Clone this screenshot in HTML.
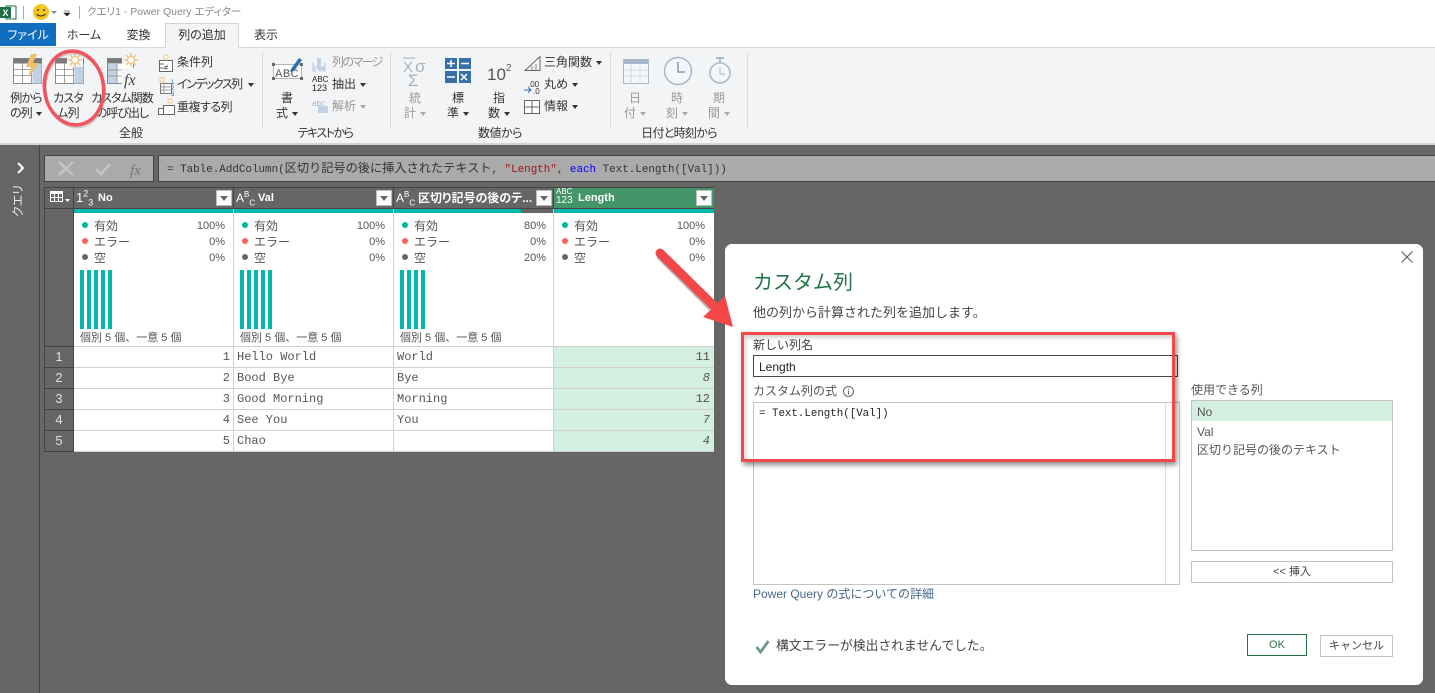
<!DOCTYPE html>
<html lang="ja"><head><meta charset="utf-8"><title>Power Query</title>
<style>
html,body{margin:0;padding:0}
body{width:1435px;height:693px;position:relative;overflow:hidden;background:#666;font-family:"Liberation Sans","Noto Sans CJK JP",sans-serif;font-size:12px;color:#333}
.a,.t{position:absolute;white-space:nowrap}
.t{line-height:16px}
.c{text-align:center}
.r{text-align:right}
.m{font-family:"Liberation Mono","Noto Sans CJK JP",monospace}
.g{color:#999}
.w{color:#fff}
.p{font-feature-settings:"palt"}
.dd{position:absolute;width:14px;height:14px;background:#fff;border:1px solid #bbb;box-sizing:content-box}
.dd:after{content:"";position:absolute;left:3px;top:5px;border:4px solid transparent;border-top:5px solid #666;border-bottom:0}
.arr{display:inline-block;width:0;height:0;border:3px solid transparent;border-top:4px solid #333;border-bottom:0;vertical-align:middle;margin-left:4px}
.arr.l{border-top-color:#aaa}
.dot{position:absolute;width:6px;height:6px;border-radius:50%}
.bar{position:absolute;width:4px;height:59px;background:#01b8aa;top:270px}
</style></head><body>

<!-- top chrome -->
<div class="a" style="left:0;top:0;width:1435px;height:145px;background:#fff"></div>
<div class="a" style="left:0;top:47px;width:1435px;height:96px;background:#f3f4f6;border-top:1px solid #d8d8d8;box-sizing:border-box"></div>
<div class="a" style="left:0;top:143px;width:1435px;height:2px;background:#d4d4d4"></div>

<svg class="a" style="left:0;top:3px" width="90" height="20" viewBox="0 0 90 20">
<rect x="6" y="3" width="10" height="13" fill="#fff" stroke="#1e7145"/>
<rect x="0" y="4" width="11" height="11" fill="#1e7145"/>
<text x="2.500" y="13" font-size="9" font-weight="700" fill="#fff" font-family="Liberation Sans">X</text>
<line x1="23.500" y1="3" x2="23.500" y2="16" stroke="#aaa"/>
<circle cx="41" cy="9" r="8" fill="#f7c61c"/>
<circle cx="38" cy="7" r="1" fill="#333"/><circle cx="44" cy="7" r="1" fill="#333"/>
<path d="M36.500 11q4.500 4 9 0" fill="none" stroke="#333"/>
<path d="M51 8h6l-3 3z" fill="#888"/>
<path d="M64 8h6M64 10h6l-3 3z" fill="#222" stroke="#222" stroke-width=".6"/>
<line x1="79.500" y1="3" x2="79.500" y2="16" stroke="#aaa"/>
</svg>
<div class="t p" style="left:87px;top:4px;color:#888;font-size:10.500px">クエリ1 - Power Query エディター</div>

<div class="a" style="left:0;top:23px;width:56px;height:23px;background:#106ebe"></div>
<div class="t w c p" style="left:0;top:27px;width:56px">ファイル</div>
<div class="t c p" style="left:56px;top:27px;width:56px">ホーム</div>
<div class="t c" style="left:112px;top:27px;width:53px">変換</div>
<div class="a" style="left:165px;top:23px;width:74px;height:25px;background:#f3f4f6;border:1px solid #d4d4d4;border-bottom:0;box-sizing:border-box"></div>
<div class="t c p" style="left:165px;top:27px;width:74px">列の追加</div>
<div class="t c" style="left:239px;top:27px;width:54px">表示</div>

<!-- ribbon icons -->
<svg class="a" style="left:0;top:48px" width="760" height="80" viewBox="0 48 760 80">
<defs>
<g id="tb"><rect x="0" y="0" width="28" height="25" fill="#fff" stroke="#8a8a8a"/><rect x="0" y="0" width="28" height="5" fill="#7a7a7a"/><path d="M0 11h28M0 17h28M9 5v20M18 5v20" stroke="#8a8a8a" stroke-width=".8"/><rect x="19" y="5" width="9" height="20" fill="#c0d2e4"/></g>
<g id="sun"><circle cx="0" cy="0" r="3.500" fill="#fff" stroke="#edc88a" stroke-width="1.500"/><path d="M0-7v3M0 4v3M-7 0h3M4 0h3M-5-5l2 2M3 3l2 2M5-5l-2 2M-3 3l-2 2" stroke="#edc88a" stroke-width="1.500"/></g>
</defs>
<use href="#tb" x="13.500" y="58.500"/>
<path d="M37 54h-6l-5 13h5l-3 11 11-15h-6z" fill="#eec06a"/>
<use href="#tb" x="55.500" y="58.500"/><rect x="67" y="53" width="16" height="14" fill="#f3f4f6"/><use href="#sun" x="75" y="60"/>
<rect x="107.500" y="58.500" width="26" height="25" fill="#fff" stroke="#8a8a8a"/><rect x="107.500" y="58.500" width="26" height="5" fill="#7a7a7a"/><rect x="108" y="64" width="9" height="19" fill="#c0d2e4"/><path d="M107 70h26M107 76h26M117 64v20" stroke="#8a8a8a" stroke-width=".8"/>
<rect x="122" y="52" width="18" height="12" fill="#f3f4f6"/><use href="#sun" x="131" y="60"/>
<rect x="122" y="68" width="16" height="18" fill="#f3f4f6"/>
<text x="124" y="85" font-family="Liberation Serif" font-style="italic" font-size="16" fill="#444">fx</text>

<rect x="159.500" y="60.500" width="13" height="11" fill="#fff" stroke="#666"/><path d="M159 64h5M159 68h5" stroke="#666"/><text x="164" y="70" font-size="8" fill="#333">≠</text><use href="#sun" transform="translate(166 57) scale(.5)"/>
<rect x="160.500" y="83.500" width="11" height="10" fill="#fff" stroke="#777"/><path d="M160 87h11M160 90h11M164 83v10" stroke="#888" stroke-width=".7"/><use href="#sun" transform="translate(162 80) scale(.55)"/><text x="171" y="84" font-size="6" fill="#2b6cb0">1</text><text x="171" y="90" font-size="6" fill="#2b6cb0">2</text><text x="171" y="96" font-size="6" fill="#2b6cb0">3</text>
<rect x="158.500" y="108.500" width="6" height="6" fill="#fff" stroke="#666"/><rect x="163.500" y="105.500" width="11" height="9" fill="#fff" stroke="#666"/><use href="#sun" transform="translate(170 101) scale(.5)"/>
<line x1="262.500" y1="52" x2="262.500" y2="140" stroke="#dcdcdc"/>

<rect x="273.500" y="64.500" width="28" height="14" fill="#fff" stroke="#888" stroke-width=".6"/>
<path d="M272 63h3v3h-3zM300 63h3v3h-3zM272 77h3v3h-3zM300 77h3v3h-3z" fill="#666"/>
<text x="275" y="77" font-size="11" fill="#555" letter-spacing=".5" font-family="Liberation Sans">ABC</text>
<path d="M291 69l8-11 3 2-8 11-4 1z" fill="#2b6cb0"/>
<rect x="317" y="58" width="4" height="11" fill="#c0d2e4"/><path d="M313 62v9h3M325 62v9h-3M316 67h8l-4 4z" fill="#c0d2e4" stroke="#c0d2e4"/>
<text x="312" y="82" font-size="8" fill="#222" font-family="Liberation Sans">ABC</text>
<text x="312" y="91" font-size="9" fill="#222" font-family="Liberation Sans">123</text>
<text x="312" y="106" font-size="8" fill="#a5b5c5" font-family="Liberation Sans">abc</text>
<rect x="318" y="106" width="10" height="7" fill="#c0d2e4"/>
<line x1="390.500" y1="52" x2="390.500" y2="140" stroke="#dcdcdc"/>

<path d="M403 58h12" stroke="#aab2ba"/><text x="403" y="72" font-size="15" fill="#aab2ba" font-family="Liberation Sans">X</text><text x="415" y="72" font-size="17" fill="#aab2ba" font-family="Liberation Sans">σ</text><text x="408" y="86" font-size="17" fill="#aab2ba" font-family="Liberation Sans">Σ</text>
<g><rect x="445" y="58" width="12" height="11" fill="#376fa8"/><rect x="459" y="58" width="12" height="11" fill="#376fa8"/><rect x="445" y="71" width="12" height="12" fill="#376fa8"/><rect x="459" y="71" width="12" height="12" fill="#376fa8"/><path d="M447 63.500h8M451 60v7M461 63.500h8M447 77h8M461 74l6 6M467 74l-6 6" stroke="#fff" stroke-width="1.500"/></g>
<text x="487" y="80" font-size="17" fill="#555" font-family="Liberation Sans">10</text><text x="506" y="71" font-size="10" fill="#555" font-family="Liberation Sans">2</text>
<path d="M525 70.500l15-14v14z" fill="none" stroke="#666"/><path d="M532 70v-4M536 70v-6" stroke="#888"/>
<text x="528" y="87" font-size="8" fill="#333" font-family="Liberation Sans">.00</text><path d="M524 90h6" stroke="#2b6cb0"/><path d="M528 87.500l3 2.500-3 2.500" fill="none" stroke="#2b6cb0"/><text x="533" y="94" font-size="8" fill="#333" font-family="Liberation Sans">.0</text>
<rect x="524.500" y="100.500" width="15" height="13" fill="#fff" stroke="#666"/><path d="M532 100v13M524 107h15" stroke="#666"/>
<line x1="610.500" y1="52" x2="610.500" y2="140" stroke="#dcdcdc"/>

<rect x="623.500" y="59.500" width="25" height="24" fill="#f3f6fa" stroke="#a8b8c8"/><rect x="623" y="59" width="26" height="5" fill="#a8b8c8"/><path d="M624 70h25M624 76h25M631 64v20M640 64v20" stroke="#c8d4e0" stroke-width=".8"/>
<circle cx="678" cy="71" r="13.500" fill="#f3f6fa" stroke="#a8b8c8" stroke-width="1.500"/><path d="M678 62v10h7" fill="none" stroke="#8a9cae" stroke-width="1.500"/>
<circle cx="720" cy="73" r="10" fill="#f3f6fa" stroke="#a8b8c8" stroke-width="1.500"/><path d="M716 58h8M720 58v5" stroke="#a8b8c8" stroke-width="2"/><path d="M720 67v7h5" fill="none" stroke="#a8b8c8"/>
<line x1="747.500" y1="52" x2="747.500" y2="140" stroke="#dcdcdc"/>
</svg>

<div class="t c p" style="left:2px;top:91px;width:48px;line-height:15px;letter-spacing:-.8px">例から<br>の列<i class="arr"></i></div>
<div class="t c p" style="left:48px;top:91px;width:40px;line-height:15px;letter-spacing:-.8px">カスタ<br>ム列</div>
<div class="t c p" style="left:90px;top:91px;width:64px;line-height:15px;letter-spacing:-1px">カスタム関数<br>の呼び出し</div>
<div class="t p" style="left:177px;top:54px">条件列</div>
<div class="t p" style="left:177px;top:76px;letter-spacing:-1.500px">インデックス列<i class="arr" style="margin-left:6px"></i></div>
<div class="t p" style="left:177px;top:99px;letter-spacing:-.5px">重複する列</div>
<div class="t c" style="left:118px;top:125px;width:26px">全般</div>

<div class="t c" style="left:272px;top:91px;width:30px;line-height:15px">書<br>式<i class="arr"></i></div>
<div class="t g p" style="left:332px;top:54px;letter-spacing:-1.600px">列のマージ</div>
<div class="t" style="left:332px;top:76px">抽出<i class="arr"></i></div>
<div class="t g" style="left:332px;top:98px">解析<i class="arr l"></i></div>
<div class="t c p" style="left:280px;top:125px;width:90px;letter-spacing:-1.500px">テキストから</div>

<div class="t c g" style="left:402px;top:91px;width:26px;line-height:15px">統<br>計<i class="arr l"></i></div>
<div class="t c" style="left:445px;top:91px;width:26px;line-height:15px">標<br>準<i class="arr"></i></div>
<div class="t c" style="left:486px;top:91px;width:26px;line-height:15px">指<br>数<i class="arr"></i></div>
<div class="t" style="left:544px;top:54px">三角関数<i class="arr"></i></div>
<div class="t p" style="left:544px;top:76px">丸め<i class="arr"></i></div>
<div class="t" style="left:544px;top:98px">情報<i class="arr"></i></div>
<div class="t c p" style="left:470px;top:125px;width:60px;letter-spacing:-.5px">数値から</div>

<div class="t c g" style="left:622px;top:91px;width:26px;line-height:15px">日<br>付<i class="arr l"></i></div>
<div class="t c g" style="left:664px;top:91px;width:26px;line-height:15px">時<br>刻<i class="arr l"></i></div>
<div class="t c g" style="left:706px;top:91px;width:26px;line-height:15px">期<br>間<i class="arr l"></i></div>
<div class="t c p" style="left:629px;top:125px;width:100px;letter-spacing:-.7px">日付と時刻から</div>

<!-- red ellipse -->
<svg class="a" style="left:38px;top:45px;z-index:5" width="75" height="88" viewBox="38 45 75 88">
<ellipse cx="75" cy="90" rx="29.500" ry="37" transform="rotate(-8 75 90)" fill="none" stroke="#888" stroke-opacity=".35" stroke-width="3"/>
<ellipse cx="74" cy="88" rx="29.500" ry="37" transform="rotate(-8 74 88)" fill="none" stroke="#f2535c" stroke-width="3.500"/>
</svg>

<!-- left pane -->
<div class="a" style="left:39px;top:145px;width:1px;height:548px;background:#444"></div>
<svg class="a" style="left:15px;top:161px" width="12" height="14"><path d="M3 2l5 5-5 5" fill="none" stroke="#fff" stroke-width="2"/></svg>
<div class="a p" style="left:0;top:193px;width:36px;text-align:center;line-height:16px;transform:rotate(-90deg);color:#eee">クエリ</div>

<!-- formula bar -->
<div class="a" style="left:44px;top:155px;width:110px;height:27px;background:#aaa;border:1px solid #444;box-sizing:border-box"></div>
<svg class="a" style="left:44px;top:155px" width="110" height="27"><path d="M15 7l14 13M29 7L15 20" stroke="#c4c4c4" stroke-width="2.500"/><path d="M52 14l5 5 9-10" fill="none" stroke="#c4c4c4" stroke-width="2.500"/><text x="86" y="20" font-family="Liberation Serif" font-style="italic" font-size="15" fill="#777">fx</text></svg>
<div class="a" style="left:158px;top:155px;width:1277px;height:27px;background:#aaa;border:1px solid #444;border-right:0;box-sizing:border-box"></div>
<div class="t m" style="left:167px;top:161px;font-size:10.900px;color:#333">= Table.AddColumn(<span style="font-size:12.200px">区切り記号の後に挿入されたテキスト</span>, <span style="color:#a31515">"Length"</span>, <span style="color:#0000ff">each</span> Text.Length([Val]))</div>

<!-- grid -->
<div class="a" style="left:44px;top:187px;width:670px;height:22px;background:#666;border-top:1px solid #444;border-bottom:1px solid #444;box-sizing:border-box"></div>
<svg class="a" style="left:50px;top:191px" width="22" height="14"><rect x=".5" y=".5" width="12" height="10" fill="#666" stroke="#fff"/><rect x="0" y="0" width="13" height="3" fill="#fff"/><path d="M0 6.500h13M4.500 0v11M8.500 0v11" stroke="#fff"/><path d="M15 8h5l-2.500 3z" fill="#fff"/></svg>

<div class="a" style="left:553px;top:187px;width:161px;height:22px;background:#439467;border-top:1px solid #444;border-bottom:1px solid #444;box-sizing:border-box"></div>
<div class="a" style="left:74px;top:209px;width:640px;height:4px;background:#01b8aa"></div>
<div class="a" style="left:521px;top:209px;width:32px;height:4px;background:#666"></div>
<div class="a" style="left:74px;top:213px;width:640px;height:133px;background:#fff"></div>
<div class="a" style="left:44px;top:209px;width:29px;height:137px;background:#666"></div>

<!-- header labels -->
<div class="t w" style="left:76px;top:190px;font-size:13px">1<sup style="font-size:9px;line-height:0">2</sup><sub style="font-size:9px;line-height:0">3</sub></div>
<div class="t w" style="left:98px;top:190px;font-weight:700;font-size:11px">No</div>
<div class="t w" style="left:236px;top:190px;font-size:12px">A<sup style="font-size:8px;line-height:0">B</sup><sub style="font-size:8px;line-height:0">C</sub></div>
<div class="t w" style="left:258px;top:190px;font-weight:700;font-size:11px">Val</div>
<div class="t w" style="left:396px;top:190px;font-size:12px">A<sup style="font-size:8px;line-height:0">B</sup><sub style="font-size:8px;line-height:0">C</sub></div>
<div class="t w p" style="left:418px;top:190px;font-weight:700;font-size:12px">区切り記号の後のテ...</div>
<div class="t w" style="left:556px;top:187px;font-size:8px;line-height:9px">ABC</div>
<div class="t w" style="left:556px;top:195px;font-size:10px;line-height:12px">123</div>
<div class="t w" style="left:578px;top:190px;font-weight:700;font-size:11px">Length</div>
<div class="dd" style="left:216px;top:190px"></div>
<div class="dd" style="left:376px;top:190px"></div>
<div class="dd" style="left:536px;top:190px"></div>
<div class="dd" style="left:696px;top:190px"></div>

<!-- profile col 1 -->
<i class="dot" style="left:82px;top:222px;background:#01b8aa"></i><i class="dot" style="left:82px;top:238px;background:#fd625e"></i><i class="dot" style="left:82px;top:254px;background:#666"></i>
<div class="t" style="left:94px;top:218px;color:#555">有効</div><div class="t" style="left:94px;top:234px;color:#555">エラー</div><div class="t" style="left:94px;top:250px;color:#555">空</div>
<div class="t r" style="left:175px;width:50px;top:218px;font-size:11px;color:#555">100%</div><div class="t r" style="left:175px;width:50px;top:234px;font-size:11px;color:#555">0%</div><div class="t r" style="left:175px;width:50px;top:250px;font-size:11px;color:#555">0%</div>
<i class="bar" style="left:80px"></i><i class="bar" style="left:87px"></i><i class="bar" style="left:94px"></i><i class="bar" style="left:101px"></i><i class="bar" style="left:108px"></i>
<div class="t" style="left:80px;top:330px;font-size:11px;color:#555">個別 5 個、一意 5 個</div>
<!-- profile col 2 -->
<i class="dot" style="left:242px;top:222px;background:#01b8aa"></i><i class="dot" style="left:242px;top:238px;background:#fd625e"></i><i class="dot" style="left:242px;top:254px;background:#666"></i>
<div class="t" style="left:254px;top:218px;color:#555">有効</div><div class="t" style="left:254px;top:234px;color:#555">エラー</div><div class="t" style="left:254px;top:250px;color:#555">空</div>
<div class="t r" style="left:335px;width:50px;top:218px;font-size:11px;color:#555">100%</div><div class="t r" style="left:335px;width:50px;top:234px;font-size:11px;color:#555">0%</div><div class="t r" style="left:335px;width:50px;top:250px;font-size:11px;color:#555">0%</div>
<i class="bar" style="left:240px"></i><i class="bar" style="left:247px"></i><i class="bar" style="left:254px"></i><i class="bar" style="left:261px"></i><i class="bar" style="left:268px"></i>
<div class="t" style="left:240px;top:330px;font-size:11px;color:#555">個別 5 個、一意 5 個</div>
<!-- profile col 3 -->
<i class="dot" style="left:402px;top:222px;background:#01b8aa"></i><i class="dot" style="left:402px;top:238px;background:#fd625e"></i><i class="dot" style="left:402px;top:254px;background:#666"></i>
<div class="t" style="left:414px;top:218px;color:#555">有効</div><div class="t" style="left:414px;top:234px;color:#555">エラー</div><div class="t" style="left:414px;top:250px;color:#555">空</div>
<div class="t r" style="left:496px;width:50px;top:218px;font-size:11px;color:#555">80%</div><div class="t r" style="left:496px;width:50px;top:234px;font-size:11px;color:#555">0%</div><div class="t r" style="left:496px;width:50px;top:250px;font-size:11px;color:#555">20%</div>
<i class="bar" style="left:400px"></i><i class="bar" style="left:407px"></i><i class="bar" style="left:414px"></i><i class="bar" style="left:421px"></i>
<div class="t" style="left:400px;top:330px;font-size:11px;color:#555">個別 5 個、一意 5 個</div>
<!-- profile col 4 -->
<i class="dot" style="left:562px;top:222px;background:#01b8aa"></i><i class="dot" style="left:562px;top:238px;background:#fd625e"></i><i class="dot" style="left:562px;top:254px;background:#666"></i>
<div class="t" style="left:574px;top:218px;color:#555">有効</div><div class="t" style="left:574px;top:234px;color:#555">エラー</div><div class="t" style="left:574px;top:250px;color:#555">空</div>
<div class="t r" style="left:655px;width:50px;top:218px;font-size:11px;color:#555">100%</div><div class="t r" style="left:655px;width:50px;top:234px;font-size:11px;color:#555">0%</div><div class="t r" style="left:655px;width:50px;top:250px;font-size:11px;color:#555">0%</div>

<!-- rows -->
<div class="a" style="left:74px;top:346px;width:640px;height:1px;background:#d0d0d0"></div>
<div class="a" style="left:74px;top:347px;width:640px;height:105px;background:#fff"></div>
<div class="a" style="left:553px;top:347px;width:161px;height:105px;background:#d4eee0"></div>
<div class="a" style="left:74px;top:367px;width:640px;height:1px;background:#d0d0d0"></div>
<div class="a" style="left:74px;top:388px;width:640px;height:1px;background:#d0d0d0"></div>
<div class="a" style="left:74px;top:409px;width:640px;height:1px;background:#d0d0d0"></div>
<div class="a" style="left:74px;top:430px;width:640px;height:1px;background:#d0d0d0"></div>
<div class="a" style="left:74px;top:451px;width:640px;height:1px;background:#d0d0d0"></div>
<!-- row-number column -->
<div class="a" style="left:45px;top:347px;width:28px;height:105px;background:#666"></div>
<div class="a" style="left:44px;top:346px;width:30px;height:1px;background:#444"></div>
<div class="a" style="left:44px;top:367px;width:30px;height:1px;background:#444"></div>
<div class="a" style="left:44px;top:388px;width:30px;height:1px;background:#444"></div>
<div class="a" style="left:44px;top:409px;width:30px;height:1px;background:#444"></div>
<div class="a" style="left:44px;top:430px;width:30px;height:1px;background:#444"></div>
<div class="a" style="left:44px;top:451px;width:30px;height:1px;background:#444"></div>
<div class="a" style="left:44px;top:187px;width:1px;height:265px;background:#444"></div>
<div class="a" style="left:73px;top:187px;width:1px;height:265px;background:#444"></div>
<!-- column separators -->
<div class="a" style="left:233px;top:187px;width:1px;height:22px;background:#444"></div>
<div class="a" style="left:393px;top:187px;width:1px;height:22px;background:#444"></div>
<div class="a" style="left:553px;top:187px;width:1px;height:22px;background:#444"></div>
<div class="a" style="left:233px;top:209px;width:1px;height:243px;background:#d0d0d0"></div>
<div class="a" style="left:393px;top:209px;width:1px;height:243px;background:#d0d0d0"></div>
<div class="a" style="left:553px;top:209px;width:1px;height:243px;background:#d0d0d0"></div>

<div class="t c" style="left:45px;width:28px;top:349px;color:#e0e0e0;font-size:13px">1</div>
<div class="t c" style="left:45px;width:28px;top:370px;color:#e0e0e0;font-size:13px">2</div>
<div class="t c" style="left:45px;width:28px;top:391px;color:#e0e0e0;font-size:13px">3</div>
<div class="t c" style="left:45px;width:28px;top:412px;color:#e0e0e0;font-size:13px">4</div>
<div class="t c" style="left:45px;width:28px;top:433px;color:#e0e0e0;font-size:13px">5</div>

<div class="t m r" style="left:180px;width:50px;top:349px;color:#555;font-size:12px">1</div>
<div class="t m r" style="left:180px;width:50px;top:370px;color:#555;font-size:12px">2</div>
<div class="t m r" style="left:180px;width:50px;top:391px;color:#555;font-size:12px">3</div>
<div class="t m r" style="left:180px;width:50px;top:412px;color:#555;font-size:12px">4</div>
<div class="t m r" style="left:180px;width:50px;top:433px;color:#555;font-size:12px">5</div>

<div class="t m" style="left:237px;top:349px;color:#555;font-size:12px">Hello World</div>
<div class="t m" style="left:237px;top:370px;color:#555;font-size:12px">Bood Bye</div>
<div class="t m" style="left:237px;top:391px;color:#555;font-size:12px">Good Morning</div>
<div class="t m" style="left:237px;top:412px;color:#555;font-size:12px">See You</div>
<div class="t m" style="left:237px;top:433px;color:#555;font-size:12px">Chao</div>

<div class="t m" style="left:397px;top:349px;color:#555;font-size:12px">World</div>
<div class="t m" style="left:397px;top:370px;color:#555;font-size:12px">Bye</div>
<div class="t m" style="left:397px;top:391px;color:#555;font-size:12px">Morning</div>
<div class="t m" style="left:397px;top:412px;color:#555;font-size:12px">You</div>

<div class="t m r" style="left:660px;width:50px;top:349px;color:#555;font-size:12px">11</div>
<div class="t m r" style="left:660px;width:50px;top:370px;color:#555;font-size:12px;font-style:italic">8</div>
<div class="t m r" style="left:660px;width:50px;top:391px;color:#555;font-size:12px">12</div>
<div class="t m r" style="left:660px;width:50px;top:412px;color:#555;font-size:12px;font-style:italic">7</div>
<div class="t m r" style="left:660px;width:50px;top:433px;color:#555;font-size:12px;font-style:italic">4</div>

<!-- dialog -->
<div class="a" style="left:725px;top:244px;width:698px;height:441px;background:#fff;border-radius:7px"></div>
<svg class="a" style="left:1400px;top:250px" width="14" height="14"><path d="M1.500 1.500l11 11M12.500 1.500l-11 11" stroke="#666" stroke-width="1.200"/></svg>
<div class="t" style="left:753px;top:270px;font-size:20px;line-height:26px;color:#217346">カスタム列</div>
<div class="t" style="left:753px;top:305px;font-size:13px;color:#444">他の列から計算された列を追加します。</div>
<div class="t" style="left:753px;top:337px;color:#444;font-size:12px">新しい列名</div>
<div class="a" style="left:753px;top:355px;width:425px;height:22px;border:1px solid #444;box-sizing:border-box"></div>
<div class="t" style="left:759px;top:359px;color:#222;font-size:12px">Length</div>
<div class="t" style="left:753px;top:383px;color:#555;font-size:12px">カスタム列の式</div>
<svg class="a" style="left:842px;top:385px" width="13" height="13"><circle cx="6.500" cy="6.500" r="5" fill="none" stroke="#666"/><path d="M6.500 5.500v4M6.500 3.500v1" stroke="#666"/></svg>
<div class="a" style="left:753px;top:402px;width:427px;height:183px;border:1px solid #c4c4c4;box-sizing:border-box"></div>
<div class="a" style="left:1165px;top:403px;width:1px;height:181px;background:#dedede"></div>
<div class="t m" style="left:759px;top:406px;color:#222;font-size:10.800px">= Text.Length([Val])</div>
<div class="t" style="left:753px;top:586px;color:#44668c;font-size:12px">Power Query の式についての詳細</div>
<div class="t" style="left:1191px;top:382px;color:#555;font-size:12px">使用できる列</div>
<div class="a" style="left:1191px;top:400px;width:202px;height:151px;border:1px solid #c4c4c4;box-sizing:border-box"></div>
<div class="a" style="left:1192px;top:401px;width:200px;height:20px;background:#d4eee0"></div>
<div class="t" style="left:1197px;top:404px;color:#555">No</div>
<div class="t" style="left:1197px;top:424px;color:#555">Val</div>
<div class="t" style="left:1197px;top:442px;color:#555;font-size:12px">区切り記号の後のテキスト</div>
<div class="a c" style="left:1191px;top:561px;width:202px;height:22px;border:1px solid #c4c4c4;box-sizing:border-box;line-height:20px;font-size:11px;color:#444">&lt;&lt; 挿入</div>
<svg class="a" style="left:755px;top:639px" width="16" height="16"><path d="M1.500 8l4 5 8-11" fill="none" stroke="#6b9e84" stroke-width="2.800"/></svg>
<div class="t" style="left:776px;top:638px;color:#444;font-size:12.800px">構文エラーが検出されませんでした。</div>
<div class="a c" style="left:1247px;top:634px;width:60px;height:22px;border:1px solid #217346;box-sizing:border-box;line-height:20px;color:#217346;font-size:11px">OK</div>
<div class="a c" style="left:1320px;top:635px;width:73px;height:22px;border:1px solid #c4c4c4;box-sizing:border-box;line-height:20px;color:#444;font-size:11px">キャンセル</div>

<!-- red annotations -->
<div class="a" style="left:741px;top:332px;width:434px;height:130px;border:3px solid #f44848;box-sizing:border-box;box-shadow:2px 3px 5px rgba(0,0,0,.45),inset 2px 3px 4px rgba(0,0,0,.18)"></div>
<svg class="a" style="left:650px;top:245px;overflow:visible" width="90" height="90" viewBox="650 245 90 90">
<path d="M660 254l50 50" stroke="rgba(0,0,0,.3)" stroke-width="9" stroke-linecap="round" transform="translate(1 2)"/>
<path d="M660 253l53 52" stroke="#f44848" stroke-width="9" stroke-linecap="round"/>
<path d="M733 327l-30-10 22-21z" fill="#f44848"/>
</svg>
</body></html>
